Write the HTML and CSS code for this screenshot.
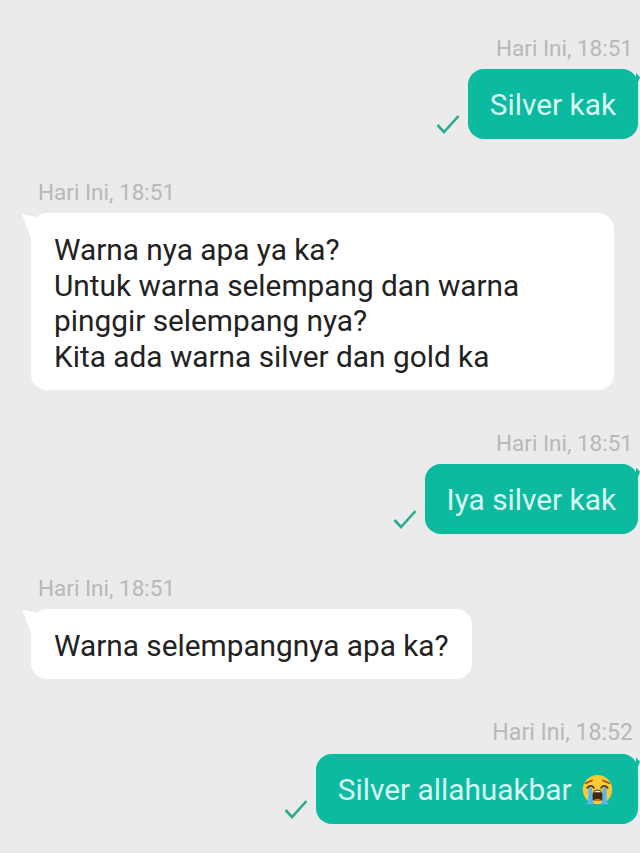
FILE: index.html
```html
<!DOCTYPE html>
<html lang="en">
<head>
  <meta charset="UTF-8" />
  <title>Chat</title>
  <link rel="stylesheet" href="styles.css">
</head>
<body>
  <div class="chat">
    <div class="msg sent">
      <div class="time">Hari Ini, 18:51</div>
      <div class="row">
        <svg class="check" viewBox="0 0 24 20"><path d="M1.5 11l6.5 7L22.5 2" /></svg>
        <div class="bubble">Silver kak</div>
      </div>
    </div>

    <div class="msg received gap-a">
      <div class="time">Hari Ini, 18:51</div>
      <div class="bubble wide">Warna nya apa ya ka?<br>Untuk warna selempang dan warna<br>pinggir selempang nya?<br>Kita ada warna silver dan gold ka</div>
    </div>

    <div class="msg sent gap-a">
      <div class="time">Hari Ini, 18:51</div>
      <div class="row">
        <svg class="check" viewBox="0 0 24 20"><path d="M1.5 11l6.5 7L22.5 2" /></svg>
        <div class="bubble">Iya silver kak</div>
      </div>
    </div>

    <div class="msg received gap-b">
      <div class="time">Hari Ini, 18:51</div>
      <div class="bubble">Warna selempangnya apa ka?</div>
    </div>

    <div class="msg sent gap-b">
      <div class="time wide-time">Hari Ini, 18:52</div>
      <div class="row">
        <svg class="check" viewBox="0 0 24 20"><path d="M1.5 11l6.5 7L22.5 2" /></svg>
        <div class="bubble">Silver allahuakbar
          <svg class="emoji" viewBox="0 0 36 36">
            <circle cx="18" cy="17" r="16" fill="#fbc934" />
            <path d="M5 10l7-3M31 10l-7-3" stroke="#8a5a1e" stroke-width="1.8" fill="none" stroke-linecap="round" />
            <path d="M7 15q4-4 7 0M22 15q3-4 7 0" stroke="#4f3416" stroke-width="2" fill="none" stroke-linecap="round" />
            <path d="M12 29q-1-12 6-12t6 12z" fill="#3f2710" />
            <path d="M13.500 20q4.500-4 9 0z" fill="#f4f4f4" />
            <path d="M13 29q5-4 10 0z" fill="#d9763f" />
            <path d="M8 15h4l1 15 2 3H5l3-3zM24 15h4l0 15 3 3H21l2-3z" fill="#5ab4ee" />
          </svg>
        </div>
      </div>
    </div>
  </div>
</body>
</html>
```

FILE: styles.css
```css
body {
  margin: 0;
  background: #ebebeb;
  font-family: "Roboto", "Noto Sans", sans-serif;
}
.chat {
  height: 853px;
  overflow: hidden;
  padding-top: 36px;
  box-sizing: border-box;
}
.msg {
  display: flex;
  flex-direction: column;
}
.sent {
  align-items: flex-end;
}
.received {
  align-items: flex-start;
  padding-left: 31px;
}
.gap-a {
  margin-top: 41px;
}
.gap-b {
  margin-top: 42px;
}
.time {
  font-size: 22.5px;
  line-height: 24px;
  color: #b8b8b8;
  margin-bottom: 9px;
}
.wide-time {
  font-size: 23.1px;
}
.sent .time {
  padding-right: 7px;
}
.received .time {
  padding-left: 7px;
}
.row {
  display: flex;
  align-items: flex-end;
  gap: 8px;
}
.bubble {
  position: relative;
  font-size: 29.8px;
  border-radius: 16px;
}
.sent .bubble {
  background: #0cba9f;
  color: #d9f8f3;
  line-height: 36px;
  padding: 18px 22px 16px;
  margin-right: 2px;
  box-shadow: 0 0 1px #7fe6d6;
}
.sent .bubble::after {
  content: "";
  position: absolute;
  top: 4px;
  right: -2px;
  width: 4px;
  height: 14px;
  background: #0cba9f;
  clip-path: polygon(0 0, 100% 30%, 0 100%);
}
.received .bubble {
  background: #fff;
  color: #222;
  line-height: 35.5px;
  padding: 19px 23px 15.5px;
}
.received .wide {
  width: 583px;
  box-sizing: border-box;
}
.received .bubble::before {
  content: "";
  position: absolute;
  top: 1px;
  left: -9px;
  width: 20px;
  height: 24px;
  background: #fff;
  clip-path: polygon(0 0, 100% 18%, 100% 100%, 45% 100%);
}
.check {
  width: 24px;
  height: 20px;
  margin-bottom: 5px;
  fill: none;
  stroke: #2bab8e;
  stroke-width: 2.6;
}
.emoji {
  width: 33px;
  height: 33px;
  vertical-align: middle;
  margin: -4px 2px -2px 2px;
}
```
